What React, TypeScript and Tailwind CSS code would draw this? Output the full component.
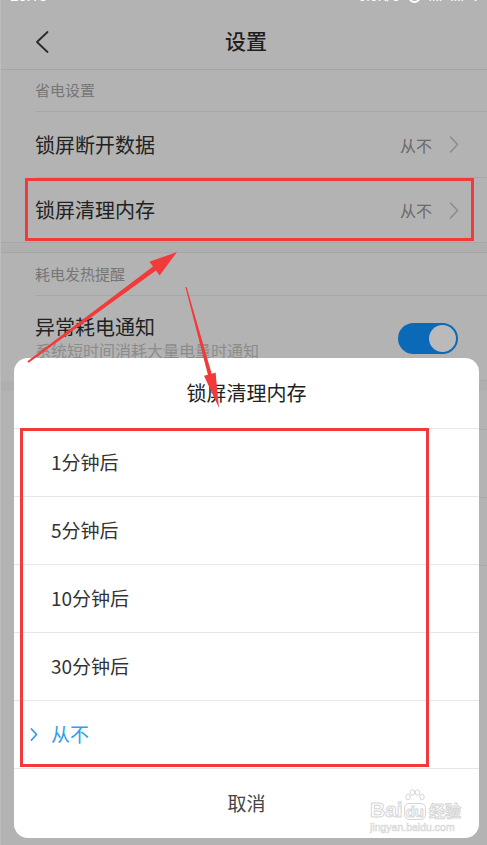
import React from "react";

function Chevron({ color = "#8a8a8a" }: { color?: string }) {
  return (
    <svg width="10" height="17" viewBox="0 0 10 17" fill="none">
      <polyline points="1.5,1 8.5,8.5 1.5,16" stroke={color} strokeWidth="1.4" strokeLinecap="round" strokeLinejoin="round" />
    </svg>
  );
}

export default function App() {
  const options = ["1分钟后", "5分钟后", "10分钟后", "30分钟后"];
  return (
    <div className="relative h-[845px] w-[487px] overflow-hidden border-l border-[#bdbdbd] bg-[#b3b3b3] font-['Noto_Sans_CJK_SC',sans-serif]">
      {/* status bar (cut off) */}
      <div className="flex h-[14px] items-start justify-between overflow-hidden pl-[9px] pr-[8px]">
        <div className="-mt-[12px] font-['Roboto',sans-serif] text-[15px] leading-[16px] text-white">23:13</div>
        <div className="-mt-[12px] flex items-center gap-[8px] font-['Roboto',sans-serif] text-[14px] leading-[16px] text-white">
          <span>0.0K/s</span>
          <span className="h-[13px] w-[13px] rounded-full border-2 border-white"></span>
          <span>ııll</span>
          <span>ııll</span>
          <span>↓</span>
        </div>
      </div>

      {/* header */}
      <header className="grid h-[56px] grid-cols-[90px_1fr_90px] items-center border-b border-[#a6a6a6]">
        <div className="pl-[34px] pt-[1px]">
          <svg width="14" height="22" viewBox="0 0 14 22" fill="none">
            <polyline points="12.5,1 2,11 12.5,21" stroke="#2a2a2a" strokeWidth="1.8" strokeLinecap="round" strokeLinejoin="round" />
          </svg>
        </div>
        <div className="-mt-[3px] pl-[4px] text-center text-[21px] font-medium leading-[28px] text-[#1e1e1e]">设置</div>
        <div></div>
      </header>

      {/* section 1 */}
      <div className="pl-[34px]">
        <div className="flex h-[42px] items-center border-b border-[#a8a8a8] text-[15px] text-[#767676]">省电设置</div>
      </div>
      <div className="pl-[34px]">
        <div className="flex h-[66px] items-center justify-between border-b border-[#a8a8a8] pr-[28px]">
          <span className="text-[20px] leading-[26px] text-[#222222]">锁屏断开数据</span>
          <span className="flex items-center gap-[17px] text-[16px] text-[#6a6a6a]">
            从不
            <Chevron />
          </span>
        </div>
      </div>
      <div className="pl-[34px]">
        <div className="flex h-[64px] items-center justify-between pr-[28px]">
          <span className="text-[20px] leading-[26px] text-[#222222]">锁屏清理内存</span>
          <span className="flex items-center gap-[17px] text-[16px] text-[#6a6a6a]">
            从不
            <Chevron />
          </span>
        </div>
      </div>
      <div className="h-[11px] border-y border-[#a6a6a6] bg-[#afafaf]"></div>

      {/* section 2 */}
      <div className="pl-[34px]">
        <div className="flex h-[43px] items-center border-b border-[#a8a8a8] text-[15px] text-[#767676]">耗电发热提醒</div>
      </div>
      <div className="pl-[34px]">
        <div className="flex h-[85px] items-center justify-between border-b border-[#a8a8a8] pr-[29px]">
          <div className="flex flex-col">
            <span className="text-[20px] leading-[24px] text-[#222222]">异常耗电通知</span>
            <span className="text-[16px] leading-[22px] text-[#8c8c8c]">系统短时间消耗大量电量时通知</span>
          </div>
          <div className="flex h-[31px] w-[60px] items-center justify-end rounded-full bg-[#0b6ab7] pr-[2px]">
            <div className="h-[27px] w-[27px] rounded-full bg-[#bababa]"></div>
          </div>
        </div>
      </div>
      <div className="h-[10px] bg-[#afafaf]"></div>
      <div className="pl-[34px]">
        <div className="flex h-[39px] items-center border-b border-[#a8a8a8] text-[15px] text-[#767676]">其他</div>
      </div>
      <div className="pl-[34px]">
        <div className="flex h-[68px] items-center border-b border-[#a8a8a8] text-[20px] text-[#222222]">省电模式</div>
      </div>
      <div className="pl-[34px]">
        <div className="flex h-[68px] items-center border-b border-[#a8a8a8] text-[20px] text-[#222222]">定时开关机</div>
      </div>

      {/* dialog */}
      <div className="absolute left-[13px] top-[358px] flex h-[480px] w-[465px] flex-col overflow-hidden rounded-[14px] bg-white">
        <div className="flex h-[71px] shrink-0 items-center justify-center border-b border-[#e6e6e6] text-[20px] leading-[26px] text-[#222222]">
          锁屏清理内存
        </div>
        {options.map((o) => (
          <div key={o} className="flex h-[68px] shrink-0 items-center border-b border-[#e6e6e6] pl-[37px] text-[19px] text-[#333333]">
            {o}
          </div>
        ))}
        <div className="flex h-[68px] shrink-0 items-center gap-[13px] border-b border-[#e6e6e6] pl-[16px] text-[19px] text-[#2f9ef0]">
          <svg width="8" height="13" viewBox="0 0 8 13" fill="none">
            <polyline points="1.5,1 6.5,6.5 1.5,12" stroke="#2f9ef0" strokeWidth="1.8" strokeLinecap="round" strokeLinejoin="round" />
          </svg>
          从不
        </div>
        <div className="flex h-[68px] shrink-0 items-center justify-center text-[19px] text-[#444444]">取消</div>
      </div>

      {/* watermark */}
      <div className="pointer-events-none absolute left-[369px] top-[789px] flex flex-col font-['Liberation_Sans',sans-serif]">
        <div className="flex items-end">
          <span className="text-[21px] font-bold leading-[20px] text-transparent [-webkit-text-stroke:1px_#d6d6d6]">Bai</span>
          <div className="relative ml-[1px] flex flex-col items-center">
            <svg width="22" height="14" viewBox="0 0 22 14" fill="none" stroke="#d6d6d6" strokeWidth="1">
              <ellipse cx="4" cy="8" rx="2.2" ry="2.8" />
              <ellipse cx="8.5" cy="3.5" rx="2.2" ry="2.8" />
              <ellipse cx="13.5" cy="3.5" rx="2.2" ry="2.8" />
              <ellipse cx="18" cy="8" rx="2.2" ry="2.8" />
            </svg>
            <span className="rounded-[5px] border border-[#d6d6d6] px-[1px] text-[15px] font-bold leading-[15px] text-transparent [-webkit-text-stroke:1px_#d6d6d6]">du</span>
          </div>
          <span className="ml-[3px] font-['Noto_Sans_CJK_SC',sans-serif] text-[16px] font-bold leading-[20px] text-transparent [-webkit-text-stroke:1px_#d6d6d6]">经验</span>
        </div>
        <span className="mt-[2px] text-[10.5px] leading-[11px] text-transparent [-webkit-text-stroke:0.6px_#d6d6d6]">jingyan.baidu.com</span>
      </div>

      {/* annotations */}
      <div className="pointer-events-none absolute left-[24px] top-[178px] h-[63px] w-[449px] border-[3px] border-[#f23a3a]"></div>
      <div className="pointer-events-none absolute left-[19px] top-[428px] h-[339px] w-[409px] border-[3px] border-[#f23a3a]"></div>
      <svg className="pointer-events-none absolute left-0 top-0" width="487" height="845" viewBox="0 0 487 845">
        <polygon
          fill="#f23a3a"
          points="27.6,362.8 155.0,270.6 158.6,275.4 176,252 148.4,261.8 152.0,266.6 26.4,361.2"
        />
        <polygon
          fill="#f23a3a"
          points="185.6,286.9 210.7,373.7 214.6,372.6 218,408 203.0,375.8 206.9,374.7 184.4,287.1"
        />
      </svg>
    </div>
  );
}
